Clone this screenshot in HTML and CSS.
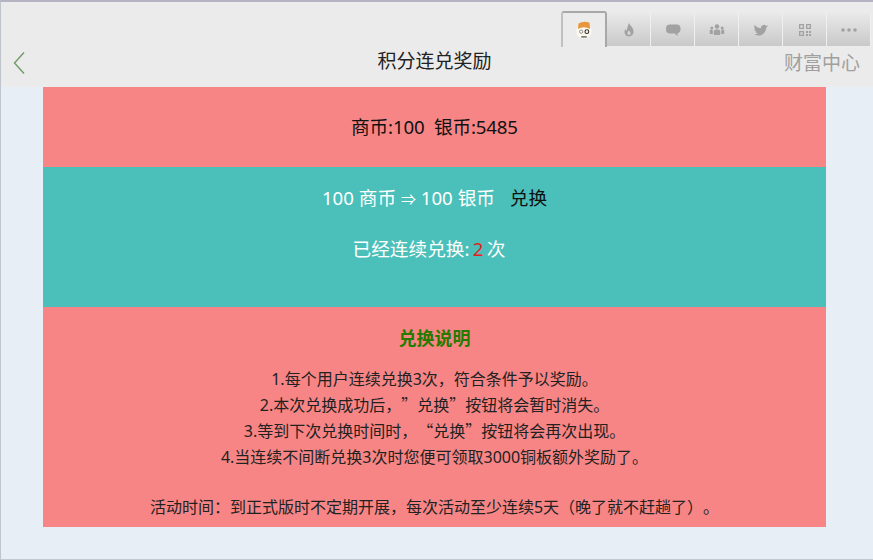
FILE: index.html
```html
<!DOCTYPE html>
<html lang="zh-CN">
<head>
<meta charset="utf-8">
<title>积分连兑奖励</title>
<link rel="stylesheet" href="styles.css">
</head>
<body>
<div class="window">
  <header class="head">
    <nav class="tabs">
      <a class="tab tab-active">
        <svg class="ico-face" viewBox="0 0 16 20" width="18" height="22">
          <circle cx="8" cy="11" r="7" fill="#fdf8ee"/>
          <path d="M2.500 9 L3 4 Q8 1.500 13 3.500 L13.500 9 Q8 6 2.500 9 Z" fill="#e8963c"/>
          <circle cx="5.400" cy="11.500" r="1.500" fill="none" stroke="#888" stroke-width=".8"/>
          <circle cx="10.600" cy="11.500" r="1.700" fill="none" stroke="#333" stroke-width="1"/>
          <rect x="5.500" y="15.500" width="5" height="1.500" fill="#777"/>
        </svg>
      </a>
      <a class="tab">
        <svg viewBox="0 0 16 16" width="16" height="16"><path class="ig" d="M8 1c1 2.500 4.500 4.500 4.500 8.500A4.500 4.500 0 0 1 8 14.500a4.500 4.500 0 0 1-4.500-4.500C3.500 8.500 4.200 7.500 5 7c0 1 .5 1.500 1 1.800C5.800 6 7 3.500 8 1zm0 7.500c-.8 1-1.600 1.700-1.600 2.800a1.600 1.600 0 0 0 3.200 0c0-1.100-.8-1.800-1.600-2.800z" fill-rule="evenodd"/></svg>
      </a>
      <a class="tab">
        <svg viewBox="0 0 16 16" width="16" height="16"><path class="ig" d="M5 2.500h6.500a4 4 0 0 1 4 4v1a4 4 0 0 1-3 3.800l.3 2.700-3.300-2.500H5a4 4 0 0 1-4-4v-1a4 4 0 0 1 4-4z"/></svg>
      </a>
      <a class="tab">
        <svg viewBox="0 0 16 16" width="16" height="16"><circle class="ig" cx="8" cy="4.500" r="2.300"/><path class="ig" d="M4.800 13V9.500a2 2 0 0 1 2-2h2.400a2 2 0 0 1 2 2V13z"/><circle class="ig" cx="2.800" cy="6" r="1.500"/><path class="ig" d="M.8 12V9.500a1.500 1.500 0 0 1 3-1V12z"/><circle class="ig" cx="13.200" cy="6" r="1.500"/><path class="ig" d="M12.200 12V8.500a1.500 1.500 0 0 1 3 1V12z"/></svg>
      </a>
      <a class="tab">
        <svg viewBox="0 0 16 16" width="16" height="16"><path class="ig" d="M15.500 4.200l-1.700.6 1.300-1.600-1.900.7a3 3 0 0 0-5.200 2.400C5.500 6.200 3.300 5 1.600 3c-.7 1.400-.3 2.900.8 3.900l-1.200-.3c.1 1.400 1 2.400 2.300 2.800l-1.100.1c.4 1 1.300 1.700 2.500 1.800-1 .8-2.300 1.100-3.700 1 5.500 3 11.500.2 12.100-6.700z"/></svg>
      </a>
      <a class="tab">
        <svg viewBox="0 0 16 16" width="16" height="16"><path class="ig" d="M2 2h5v5H2zm1.300 1.300v2.400h2.400V3.300zM9 2h5v5H9zm1.300 1.300v2.400h2.400V3.300zM2 9h5v5H2zm1.300 1.300v2.400h2.400v-2.400zM9 9h2v2H9zm3 0h2v2h-2zm-3 3h2v2H9zm3 0h2v2h-2z" fill-rule="evenodd"/></svg>
      </a>
      <a class="tab">
        <svg viewBox="0 0 18 16" width="18" height="16"><circle class="ig" cx="3" cy="8" r="1.800"/><circle class="ig" cx="9" cy="8" r="1.800"/><circle class="ig" cx="15" cy="8" r="1.800"/></svg>
      </a>
    </nav>
    <div class="titlebar">
      <a class="back">
        <svg viewBox="0 0 12 24" width="12" height="24"><path d="M11 1.500 L1.500 12 L11 22.500" fill="none" stroke="#6f9a67" stroke-width="1.400"/></svg>
      </a>
      <h1 class="title">积分连兑奖励</h1>
      <a class="wealth">财富中心</a>
    </div>
  </header>
  <main class="content">
    <section class="panel panel-balance">
      <p class="balance">商币:100&nbsp; 银币:5485</p>
    </section>
    <section class="panel panel-exchange">
      <p class="rate">100 商币 <span class="arrow">⇒</span> 100 银币 <a class="action">兑换</a></p>
      <p class="streak">已经连续兑换: <span class="count">2</span> 次</p>
    </section>
    <section class="panel panel-notes">
      <h2 class="notes-title">兑换说明</h2>
      <p class="notes">1.每个用户连续兑换3次，符合条件予以奖励。<br>2.本次兑换成功后，<span class="quote">”</span>兑换<span class="quote">”</span>按钮将会暂时消失。<br>3.等到下次兑换时间时，<span class="quote">“</span>兑换<span class="quote">”</span>按钮将会再次出现。<br>4.当连续不间断兑换3次时您便可领取3000铜板额外奖励了。<br><br>活动时间：到正式版时不定期开展，每次活动至少连续5天（晚了就不赶趟了）。</p>
    </section>
  </main>
</div>
</body>
</html>
```
FILE: styles.css
```css
* { box-sizing: border-box; }
html, body { margin: 0; padding: 0; }
body {
  width: 873px;
  height: 560px;
  overflow: hidden;
  font-family: "Noto Sans", "Noto Sans CJK SC", sans-serif;
  background: #e8eef6;
  text-spacing-trim: space-all;
}
.window {
  width: 873px;
  height: 560px;
  display: flex;
  flex-direction: column;
  border-top: 2px solid #b4b4c4;
  border-left: 1px solid #c0c4cc;
  border-bottom: 1px solid #c4c8d0;
}
.head {
  height: 85px;
  background: #ebebeb;
  display: flex;
  flex-direction: column;
  flex: none;
}
.tabs {
  display: flex;
  justify-content: flex-end;
  padding: 9px 2px 0 0;
  height: 44px;
  flex: none;
}
.tab {
  width: 44px;
  height: 33px;
  margin-top: 2px;
  display: flex;
  align-items: center;
  justify-content: center;
  background: linear-gradient(#e9e9e9, #c9c9c9);
  border-right: 1px solid #f0f0f0;
}
.tab-active {
  width: 46px;
  height: 36px;
  margin-top: 0;
  background: #ebebeb;
  border: 1px solid #c4c4c4;
  border-top: 2px solid #a8a8a8;
  border-right: 2px solid #a8a8a8;
  border-left: 2px solid #c0c0c0;
  border-bottom: 0;
  border-radius: 3px 3px 0 0;
}
.ig { fill: #a2a2a2; }
.titlebar {
  flex: 1;
  display: flex;
  align-items: center;
  justify-content: space-between;
  padding: 0 13px 7px 12px;
  position: relative;
}
.back { display: flex; }
.title {
  margin: 0;
  position: absolute;
  left: 0;
  right: 5px;
  top: 2px;
  text-align: center;
  font-size: 19px;
  font-weight: 400;
  line-height: 26px;
  color: #222;
}
.wealth {
  font-size: 19px;
  line-height: 26px;
  color: #a0a0a0;
}
.content {
  flex: 1;
  padding: 0 47px 32px 42px;
  display: flex;
  flex-direction: column;
}
.panel { text-align: center; }
.panel p, .panel h2 { margin: 0; }
.panel-balance {
  height: 80px;
  background: #f78585;
  padding-top: 27px;
}
.panel .balance {
  font-size: 18.670px;
  line-height: 26px;
  color: #111;
  letter-spacing: -.15px;
}
.panel-exchange {
  height: 140px;
  background: #4bbfb9;
  padding-top: 18px;
  color: #fff;
  font-size: 18.670px;
  line-height: 26px;
}
.arrow { font-size: 15px; }
.action { color: #111; margin-left: 10px; }
.panel .streak {
  margin-top: 24px;
  padding-right: 11px;
  word-spacing: -1.500px;
}
.count { color: #e62020; }
.panel-notes {
  height: 220px;
  background: #f78585;
  padding-top: 19px;
  color: #222;
}
.panel .notes-title {
  font-size: 18px;
  line-height: 24px;
  font-weight: 700;
  color: #257a00;
}
.panel .notes {
  margin-top: 17px;
  font-size: 16px;
  line-height: 25.200px;
}
.quote { font-family: "Noto Sans CJK SC", sans-serif; }
```
